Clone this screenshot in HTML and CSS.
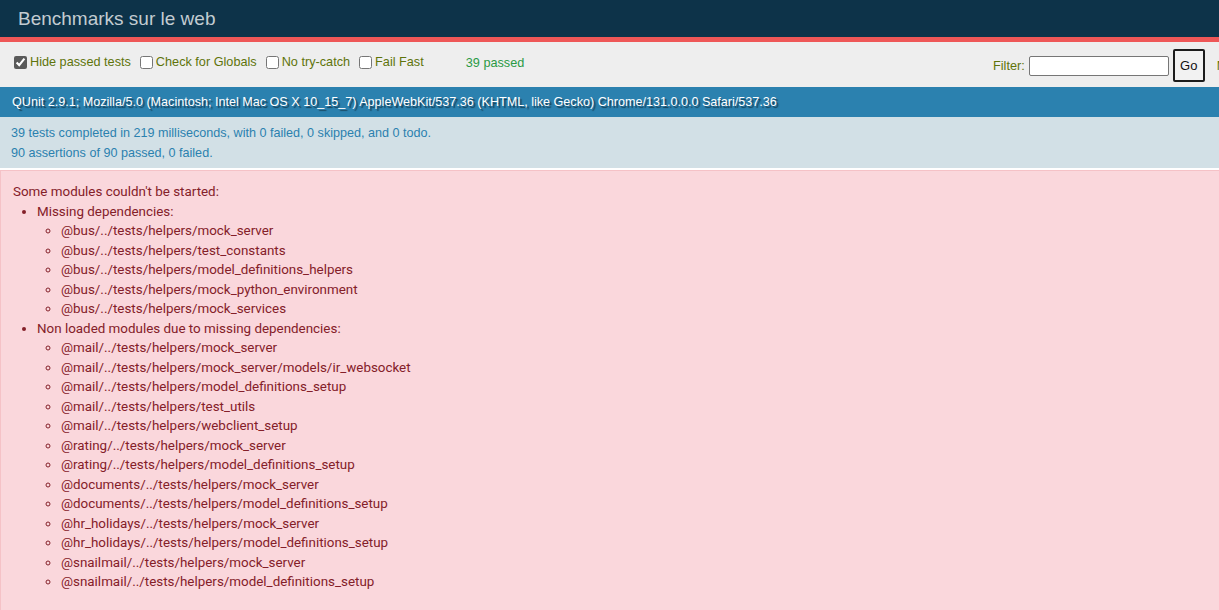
FILE: index.html
```html
<!DOCTYPE html>
<html lang="fr">
<head>
<meta charset="utf-8">
<title>Benchmarks sur le web</title>
<link rel="stylesheet" href="styles.css">
</head>
<body>
<div class="qunit">
  <h1 class="qunit-header">Benchmarks sur le web</h1>
  <div class="qunit-banner"></div>
  <div class="toolbar">
    <div class="toolbar-left">
      <label class="opt"><input type="checkbox" checked><span>Hide passed tests</span></label>
      <label class="opt"><input type="checkbox"><span>Check for Globals</span></label>
      <label class="opt"><input type="checkbox"><span>No try-catch</span></label>
      <label class="opt"><input type="checkbox"><span>Fail Fast</span></label>
      <span class="passed">39 passed</span>
    </div>
    <div class="toolbar-right">
      <label class="filter-label" for="filter">Filter:</label>
      <input id="filter" class="filter-input" type="text">
      <button class="go" type="button">Go</button>
      <span class="module-label">Module: All modules</span>
    </div>
  </div>
  <div class="user-agent">QUnit 2.9.1; Mozilla/5.0 (Macintosh; Intel Mac OS X 10_15_7) AppleWebKit/537.36 (KHTML, like Gecko) Chrome/131.0.0.0 Safari/537.36</div>
  <p class="test-result">39 tests completed in 219 milliseconds, with 0 failed, 0 skipped, and 0 todo.<br>90 assertions of 90 passed, 0 failed.</p>
</div>
<div class="alert">
  Some modules couldn't be started:
  <ul class="mod-list">
    <li>Missing dependencies:
      <ul class="sub-list">
        <li>@bus/../tests/helpers/mock_server</li>
        <li>@bus/../tests/helpers/test_constants</li>
        <li>@bus/../tests/helpers/model_definitions_helpers</li>
        <li>@bus/../tests/helpers/mock_python_environment</li>
        <li>@bus/../tests/helpers/mock_services</li>
      </ul>
    </li>
    <li>Non loaded modules due to missing dependencies:
      <ul class="sub-list">
        <li>@mail/../tests/helpers/mock_server</li>
        <li>@mail/../tests/helpers/mock_server/models/ir_websocket</li>
        <li>@mail/../tests/helpers/model_definitions_setup</li>
        <li>@mail/../tests/helpers/test_utils</li>
        <li>@mail/../tests/helpers/webclient_setup</li>
        <li>@rating/../tests/helpers/mock_server</li>
        <li>@rating/../tests/helpers/model_definitions_setup</li>
        <li>@documents/../tests/helpers/mock_server</li>
        <li>@documents/../tests/helpers/model_definitions_setup</li>
        <li>@hr_holidays/../tests/helpers/mock_server</li>
        <li>@hr_holidays/../tests/helpers/model_definitions_setup</li>
        <li>@snailmail/../tests/helpers/mock_server</li>
        <li>@snailmail/../tests/helpers/model_definitions_setup</li>
      </ul>
    </li>
  </ul>
</div>
</body>
</html>
```

FILE: styles.css
```css
html, body {
  margin: 0;
  padding: 0;
  background: #fff;
}
body {
  width: 1219px;
  overflow: hidden;
}
.qunit {
  font-family: "Liberation Sans", Arial, sans-serif;
  font-size: 12.6px;
}
.qunit-header {
  margin: 0;
  height: 37px;
  box-sizing: border-box;
  padding: 8px 0 0 18px;
  background: #0d3349;
  color: #c2ccd1;
  font-size: 19px;
  line-height: 21px;
  font-weight: 400;
}
.qunit-banner {
  height: 5px;
  background: #ee5757;
}
.toolbar {
  display: flex;
  align-items: flex-start;
  height: 45px;
  box-sizing: border-box;
  background: #eee;
  color: #5e740b;
  overflow: hidden;
  white-space: nowrap;
  font-size: 12.7px;
}
.toolbar-left {
  flex: 0 0 979px;
  display: flex;
  align-items: center;
  padding: 13px 0 0 14px;
  height: 15px;
}
.opt {
  display: flex;
  align-items: center;
  margin-right: 9px;
  line-height: 15px;
}
.opt input {
  margin: 0 3px 0 0;
  width: 13px;
  height: 13px;
  accent-color: #5a5a5a;
}
.passed {
  margin-left: 33px;
  color: #2a9a45;
}
.toolbar-right {
  flex: none;
  display: flex;
  align-items: center;
  padding-top: 7px;
}
.filter-label {
  margin-right: 4px;
}
.filter-input {
  width: 140px;
  height: 20px;
  box-sizing: border-box;
  margin: 0 4px 0 0;
  border: 1px solid #767676;
  border-radius: 2px;
  background: #fff;
  font: inherit;
}
.go {
  width: 32px;
  height: 33px;
  box-sizing: border-box;
  margin: 0 12px 0 0;
  padding: 0;
  border: 2px solid #1c1c1c;
  border-radius: 2px;
  background: #f2f2f2;
  color: #111;
  font: 13px "Liberation Sans", Arial, sans-serif;
}
.user-agent {
  height: 30px;
  box-sizing: border-box;
  padding: 7px 12px 0;
  line-height: 16px;
  background: #2b81af;
  color: #fff;
  text-shadow: rgba(0, 0, 0, 0.5) 2px 2px 1px;
  white-space: nowrap;
  overflow: hidden;
}
.test-result {
  margin: 0;
  height: 51px;
  box-sizing: border-box;
  padding: 6px 11px 0;
  line-height: 20px;
  background: #d2e0e6;
  color: #2b81af;
}
.alert {
  margin-top: 2px;
  border: 1px solid #f5c2c7;
  border-right: none;
  background: #fad7dc;
  color: #842029;
  padding: 11px 12px 20px 12px;
  font-family: Roboto, "Liberation Sans", sans-serif;
  font-size: 13.4px;
  line-height: 19.5px;
}
.mod-list {
  margin: 0;
  padding-left: 24px;
}
.sub-list {
  margin: 0;
  padding-left: 24px;
}
```
